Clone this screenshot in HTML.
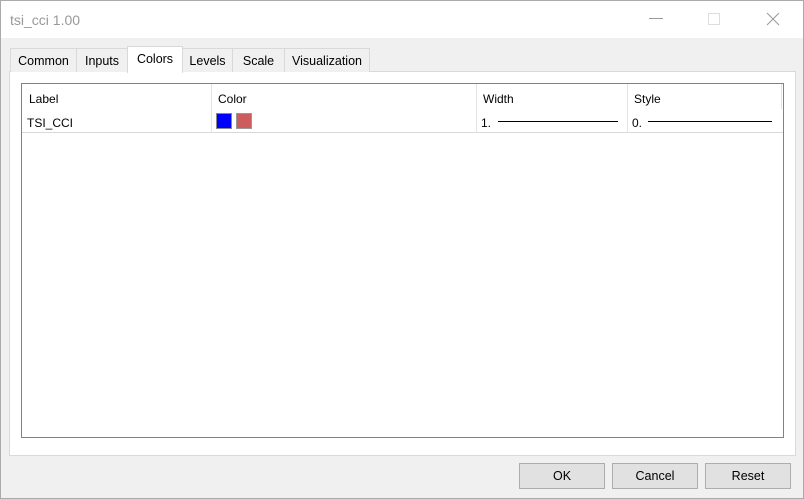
<!DOCTYPE html><html><head><style>
*{margin:0;padding:0;box-sizing:border-box}
body{width:804px;height:499px;background:#f0f0f0;font-family:"Liberation Sans",sans-serif;font-size:12px;color:#000;position:relative;overflow:hidden}
.a{position:absolute}
.win{left:0;top:0;width:804px;height:499px;border:1px solid #aaa}
.tb{left:1px;top:1px;width:802px;height:37px;background:#fff}
.tab{position:absolute;top:48px;height:24px;background:#f0f0f0;border:1px solid #d9d9d9;border-bottom:none;text-align:center;line-height:25px;font-size:12.5px}
.btn{position:absolute;top:463px;width:86px;height:26px;background:#e1e1e1;border:1px solid #adadad;text-align:center;line-height:25px;font-size:12.5px}
.sep{position:absolute;top:84px;width:1px;height:49px;background:#e3e3e3}
</style></head><body>
<div class="a win"></div>
<div class="a tb"></div>
<div class="a" style="left:10px;top:12px;font-size:14px;color:#999">tsi_cci 1.00</div>
<div class="a" style="left:649px;top:18px;width:14px;height:1px;background:#999"></div>
<div class="a" style="left:708px;top:13px;width:12px;height:12px;border:1px solid #ddd"></div>
<svg class="a" style="left:766px;top:12px" width="14" height="14"><path d="M1 1L13 13M13 1L1 13" stroke="#999" stroke-width="1"/></svg>
<div class="a" style="left:9px;top:71px;width:787px;height:385px;background:#fff;border:1px solid #d9d9d9"></div>
<div class="tab" style="left:10px;width:67px">Common</div>
<div class="tab" style="left:76px;width:52px">Inputs</div>
<div class="tab" style="left:127px;top:46px;height:27px;width:56px;background:#fff;line-height:25px">Colors</div>
<div class="tab" style="left:182px;width:51px">Levels</div>
<div class="tab" style="left:232px;width:53px">Scale</div>
<div class="tab" style="left:284px;width:86px">Visualization</div>
<div class="a" style="left:21px;top:83px;width:763px;height:355px;border:1px solid #828282;background:#fff"></div>
<div class="a" style="left:22px;top:132px;width:761px;height:1px;background:#d9d9d9"></div>
<div class="sep" style="left:211px"></div><div class="sep" style="left:476px"></div><div class="sep" style="left:627px"></div><div class="sep" style="left:781px;height:25px"></div>
<div class="a" style="left:29px;top:92px">Label</div>
<div class="a" style="left:218px;top:92px">Color</div>
<div class="a" style="left:483px;top:92px">Width</div>
<div class="a" style="left:634px;top:92px">Style</div>
<div class="a" style="left:27px;top:116px">TSI_CCI</div>
<div class="a" style="left:216px;top:113px;width:16px;height:16px;background:#00f;border:1px solid #888"></div>
<div class="a" style="left:236px;top:113px;width:16px;height:16px;background:#cd5c5c;border:1px solid #999"></div>
<div class="a" style="left:481px;top:116px">1.</div>
<div class="a" style="left:498px;top:121px;width:120px;height:1px;background:#000"></div>
<div class="a" style="left:632px;top:116px">0.</div>
<div class="a" style="left:648px;top:121px;width:124px;height:1px;background:#000"></div>
<div class="btn" style="left:519px">OK</div>
<div class="btn" style="left:612px">Cancel</div>
<div class="btn" style="left:705px">Reset</div>
</body></html>
